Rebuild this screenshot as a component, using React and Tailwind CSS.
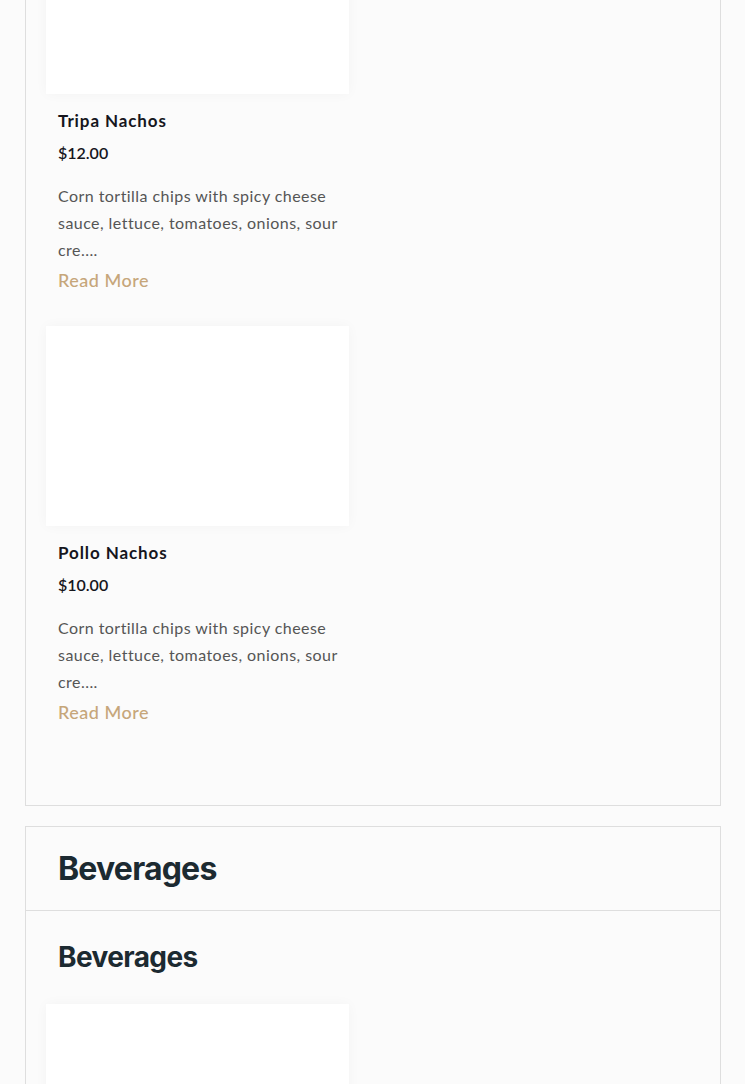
import React from 'react';

const items = [
    {
        id: 1,
        name: 'Tripa Nachos',
        price: '$12.00',
        desc: 'Corn tortilla chips with spicy cheese sauce, lettuce, tomatoes, onions, sour cre....',
    },
    {
        id: 2,
        name: 'Pollo Nachos',
        price: '$10.00',
        desc: 'Corn tortilla chips with spicy cheese sauce, lettuce, tomatoes, onions, sour cre....',
    },
];

const MenuCard = ({ item }) => (
    <div className="w-[303px]">
        <div className="h-[200px] bg-white shadow-[0_0_12px_rgba(0,0,0,0.035)]" />
        <div className="pl-3 pr-[5px] pt-4">
            <h4 className="text-[17px] leading-[22px] font-bold text-[#16161d] tracking-[0.9px]">{item.name}</h4>
            <div className="mt-[9px] text-[16px] leading-[24px] font-semibold text-[#16161d]">{item.price}</div>
            <p className="mt-[17px] text-[16px] leading-[27px] text-[#555] tracking-[0.45px]">{item.desc}</p>
            <a href="#" className="mt-1 block text-[18px] leading-[26px] font-medium text-[#c6a67a] tracking-[0.5px]">
                Read More
            </a>
        </div>
    </div>
);

const App = () => {
    return (
        <div className="min-h-screen bg-[#fbfbfb] font-['Lato','Noto_Sans',sans-serif] overflow-hidden">
            <div className="-mt-[127px] pl-[25px] pr-[24px] pb-10">
                {/* Nachos panel (scrolled) */}
                <section className="border border-[#dedede] px-5 pt-5 pb-[80px]">
                    <div className="flex flex-col gap-[33px]">
                        {items.map((item) => (
                            <MenuCard key={item.id} item={item} />
                        ))}
                    </div>
                </section>

                {/* Beverages panel */}
                <section className="mt-5 border border-[#dedede]">
                    <div className="h-[84px] flex items-center px-8 border-b border-[#dedede]">
                        <h2 className="font-['Inter',sans-serif] text-[32px] font-bold text-[#1c2a31] tracking-[-0.8px]">
                            Beverages
                        </h2>
                    </div>
                    <div className="px-5 pt-[28px] pb-10">
                        <h3 className="pl-3 font-['Inter',sans-serif] text-[28px] leading-[36px] font-bold text-[#1c2a31] tracking-[-0.6px]">
                            Beverages
                        </h3>
                        <div className="mt-[29px] w-[303px] h-[200px] bg-white shadow-[0_0_12px_rgba(0,0,0,0.035)]" />
                    </div>
                </section>
            </div>
        </div>
    );
};

export default App;
